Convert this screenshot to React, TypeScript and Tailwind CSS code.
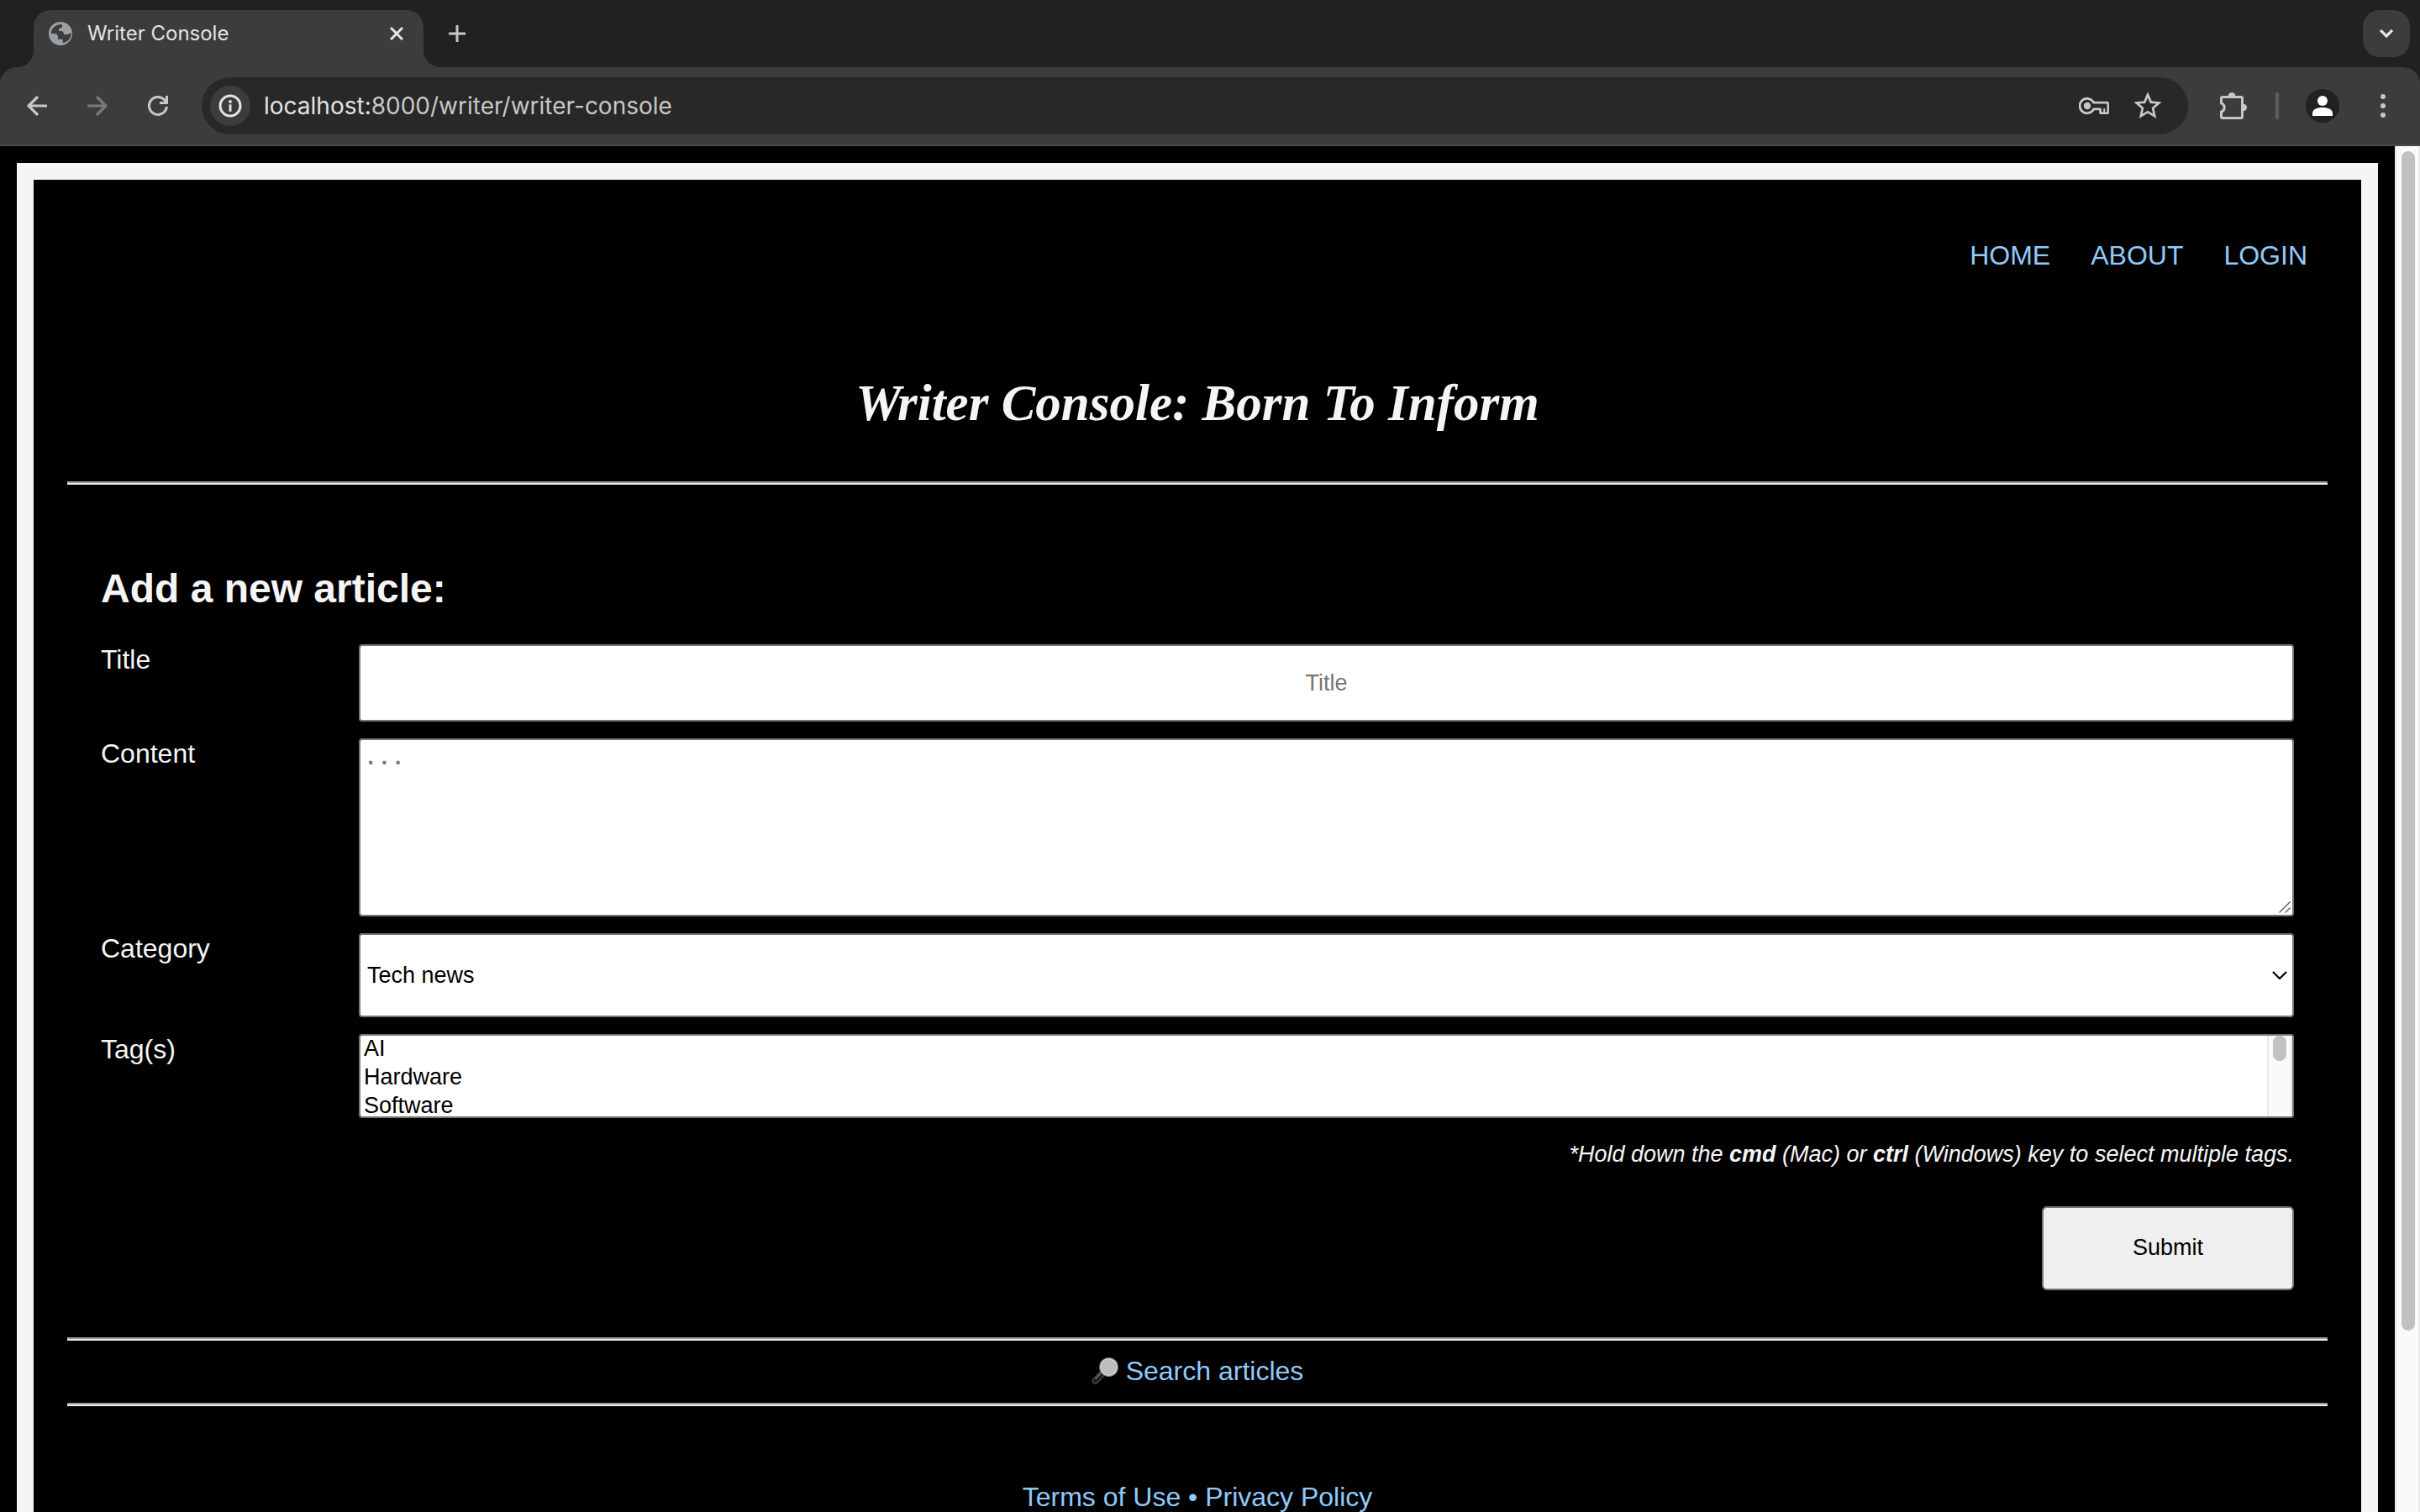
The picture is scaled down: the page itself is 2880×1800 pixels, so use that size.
import type { ReactNode } from "react";

function GlobeIcon() {
  return (
    <svg viewBox="0 0 84 84" className="size-7 shrink-0" aria-hidden="true">
      <circle cx="42" cy="42" r="42" fill="#9aa0a6" />
      <path
        d="M8 41C9 23 24 9 48 9v8c0 4-4 5-9 6-3 1-3 4-3 10h9c6 0 7 3 8 8 2 5 7 6 13 4l14-5c0 20-14 35-30 35V62H33v-9c-1-6-5-11-12-11Z"
        fill="#3c3c3c"
      />
    </svg>
  );
}

function BackIcon() {
  return (
    <svg viewBox="0 0 24 24" className="size-6" fill="none" stroke="currentColor" strokeWidth="3.2" aria-hidden="true">
      <path d="M24 12H3M13 1 2 12l11 11" />
    </svg>
  );
}

function ForwardIcon() {
  return (
    <svg viewBox="0 0 24 24" className="size-6" fill="none" stroke="currentColor" strokeWidth="3.2" aria-hidden="true">
      <path d="M0 12h21M11 1l11 11-11 11" />
    </svg>
  );
}

function ReloadIcon() {
  return (
    <svg viewBox="0 0 24 24" className="size-6" fill="none" stroke="currentColor" strokeWidth="3" aria-hidden="true">
      <path d="M22.4 13A10.5 10.5 0 1 1 19.6 4.7L22 7.5M22.5 0v8.5H14" />
    </svg>
  );
}

function InfoIcon() {
  return (
    <svg viewBox="0 0 28 28" className="size-7" aria-hidden="true">
      <circle cx="14" cy="14" r="12" fill="none" stroke="#e3e3e3" strokeWidth="3" />
      <circle cx="14" cy="9" r="1.9" fill="#e3e3e3" />
      <path d="M14 12.4v8.4" stroke="#e3e3e3" strokeWidth="3" />
    </svg>
  );
}

function KeyIcon() {
  return (
    <svg viewBox="0 0 36 24" className="h-6 w-9" fill="none" stroke="#c7c7c7" strokeWidth="2.8" strokeLinejoin="round" aria-hidden="true">
      <path d="M17.6 8.2A8.7 8.7 0 1 0 17.6 15.8H25.6V19.5a1.2 1.2 0 0 0 1.2 1.2H33.6a1.2 1.2 0 0 0 1.2-1.2V9.4a1.2 1.2 0 0 0-1.2-1.2Z" />
      <path d="M30.2 15v5" strokeWidth="2" />
      <circle cx="10" cy="12" r="4.2" fill="#c7c7c7" stroke="none" />
    </svg>
  );
}

function StarIcon() {
  return (
    <svg viewBox="0 0 24 24" className="size-10" fill="#c7c7c7" aria-hidden="true">
      <path d="M22 9.24l-7.19-.62L12 2 9.19 8.63 2 9.24l5.46 4.73L5.82 21 12 17.27 18.18 21l-1.63-7.03L22 9.24zM12 15.4l-3.76 2.27 1-4.28-3.32-2.88 4.38-.38L12 6.1l1.71 4.04 4.38.38-3.32 2.88 1 4.28L12 15.4z" />
    </svg>
  );
}

function PuzzleIcon() {
  return (
    <svg viewBox="0 0 36 36" className="size-9" aria-hidden="true">
      <path
        d="M5 7.5H27A1.5 1.5 0 0 1 28.5 9V31A1.5 1.5 0 0 1 27 32.5H5A1.5 1.5 0 0 1 3.5 31V25.2A5.5 5.5 0 0 0 3.5 14.8V9A1.5 1.5 0 0 1 5 7.5Z"
        fill="none"
        stroke="#c7c7c7"
        strokeWidth="3"
      />
      <path d="M12 6.5a4 4 0 0 1 8 0ZM29.5 16a4 4 0 0 1 0 8Z" fill="#c7c7c7" stroke="#c7c7c7" />
    </svg>
  );
}

function AvatarIcon() {
  return (
    <svg viewBox="0 0 40 40" className="size-10" aria-hidden="true">
      <circle cx="20" cy="20" r="20" fill="#1f2221" />
      <circle cx="20" cy="14" r="6" fill="#fff" />
      <path d="M8 32v-3c0-4.500 5-7 12-7s12 2.500 12 7v3Z" fill="#fff" />
    </svg>
  );
}

function MagnifierIcon() {
  return (
    <svg viewBox="0 0 32 32" className="size-8 shrink-0" aria-hidden="true">
      <path d="M12.500 19.500 4.500 27.800" stroke="#6b6b6e" strokeWidth="7.500" strokeLinecap="round" />
      <path d="M12.500 19.500 4.500 27.800" stroke="#1c1c1e" strokeWidth="5.800" strokeLinecap="round" />
      <path d="M10.500 19.500 5 25.200" stroke="#77777a" strokeWidth="1.500" strokeLinecap="round" />
      <circle cx="20.500" cy="11.500" r="11.500" fill="#6d7079" />
      <circle cx="20.500" cy="11.500" r="10.500" fill="#d8d8da" />
      <circle cx="20.500" cy="11.500" r="9.300" fill="#bdbdbd" />
    </svg>
  );
}

function ToolButton({ label, className = "", children }: { label: string; className?: string; children: ReactNode }) {
  return (
    <button type="button" aria-label={label} className={`flex h-14 w-14 shrink-0 items-center justify-center rounded-full ${className}`}>
      {children}
    </button>
  );
}

function Flare({ className }: { className: string }) {
  return (
    <svg viewBox="0 0 20 20" className={`absolute bottom-0 size-5 ${className}`} fill="#3c3c3c" aria-hidden="true">
      <path d="M20 0v20H0A20 20 0 0 0 20 0Z" />
    </svg>
  );
}

function BrowserChrome() {
  return (
    <header className="shrink-0 bg-[#1f2221] font-['Inter',sans-serif]">
      <div className="flex h-20 items-end pr-3 pl-10">
        <div className="relative flex h-[68px] w-[464px] items-center rounded-t-[20px] bg-[#3c3c3c] pr-4 pb-3 pl-[18px]">
          <Flare className="-left-5" />
          <Flare className="-right-5 -scale-x-100" />
          <GlobeIcon />
          <span className="ml-[18px] flex-1 text-[24px] leading-8 text-[#e3e3e3]">Writer Console</span>
          <button type="button" aria-label="Close tab" className="flex size-8 items-center justify-center text-[#e3e3e3]">
            <svg viewBox="0 0 16 16" className="size-4" stroke="currentColor" strokeWidth="3" aria-hidden="true">
              <path d="m1 1 14 14M15 1 1 15" />
            </svg>
          </button>
        </div>
        <button type="button" aria-label="New tab" className="mb-3 ml-3 flex size-14 items-center justify-center text-[#c7c7c7]">
          <svg viewBox="0 0 20 20" className="size-5" stroke="currentColor" strokeWidth="3" aria-hidden="true">
            <path d="M10 0v20M0 10h20" />
          </svg>
        </button>
        <button type="button" aria-label="Search tabs" className="mb-3 ml-auto flex size-14 items-center justify-center rounded-[20px] bg-[#3c3c3c] text-[#e3e3e3]">
          <svg viewBox="0 0 16 12" className="h-3 w-4" fill="none" stroke="currentColor" strokeWidth="3.2" aria-hidden="true">
            <path d="m1 2 7 7 7-7" />
          </svg>
        </button>
      </div>

      <div className="flex h-[94px] items-center rounded-t-[20px] border-b-2 border-[#4a4a4a] bg-[#3c3c3c] px-4">
        <div className="flex gap-4">
          <ToolButton label="Back" className="text-[#c7c7c7]"><BackIcon /></ToolButton>
          <ToolButton label="Forward" className="text-[#7a7a7a]"><ForwardIcon /></ToolButton>
          <ToolButton label="Reload" className="text-[#c7c7c7]"><ReloadIcon /></ToolButton>
        </div>
        <div className="ml-6 flex h-[68px] flex-1 items-center rounded-full bg-[#282828] pr-7 pl-[10px]">
          <button type="button" aria-label="View site information" className="flex size-12 shrink-0 items-center justify-center rounded-full bg-[#3c3c3c]">
            <InfoIcon />
          </button>
          <div className="ml-4 flex-1 text-[28px] leading-9 text-[#c7c7c7]">
            <span className="text-[#e3e3e3]">localhost:</span>8000/writer/writer-console
          </div>
          <button type="button" aria-label="Manage passwords"><KeyIcon /></button>
          <button type="button" aria-label="Bookmark this tab" className="ml-[26px]"><StarIcon /></button>
        </div>
        <ToolButton label="Extensions" className="ml-[26px]"><PuzzleIcon /></ToolButton>
        <span className="ml-[22px] h-8 w-1 shrink-0 rounded-full bg-[#5e5e5e]" />
        <button type="button" aria-label="Profile" className="ml-8 shrink-0"><AvatarIcon /></button>
        <ToolButton label="Browser menu" className="ml-6">
          <svg viewBox="0 0 6 28" className="h-7 w-1.5" fill="#c7c7c7" aria-hidden="true">
            <circle cx="3" cy="3" r="3" />
            <circle cx="3" cy="14" r="3" />
            <circle cx="3" cy="25" r="3" />
          </svg>
        </ToolButton>
      </div>
    </header>
  );
}

function Rule() {
  return <hr className="h-1 border-t-2 border-b-2 border-t-[#9a9a9a] border-b-[#eeeeee]" />;
}

const navLinks = ["HOME", "ABOUT", "LOGIN"];
const tags = ["AI", "Hardware", "Software"];

function ArticleForm() {
  return (
    <form className="px-10 pt-24 pb-14" onSubmit={(e) => e.preventDefault()}>
      <h2 className="text-[48px] leading-[56px] font-bold">Add a new article:</h2>
      <div className="mt-[38px] grid grid-cols-[307px_1fr] gap-y-5 text-[32px] leading-9">
        <label htmlFor="title">Title</label>
        <input
          id="title"
          type="text"
          placeholder="Title"
          className="h-[92px] w-full rounded-[4px] border-2 border-[#767676] bg-white text-center text-[27px] text-black placeholder:text-[#757575]"
        />

        <label htmlFor="content">Content</label>
        <div className="relative flex">
          <textarea
            id="content"
            placeholder="..."
            className="h-[212px] w-full resize-none rounded-[4px] border-2 border-[#767676] bg-white p-1 font-['Liberation_Mono',monospace] text-[27px] leading-9 text-black placeholder:font-bold placeholder:text-[#757575]"
          />
          <svg viewBox="0 0 14 14" className="pointer-events-none absolute right-1 bottom-1 size-3.5" stroke="#5a5a5a" strokeWidth="1.400" aria-hidden="true">
            <path d="M.5 13.500 13.500.5M7.500 13.500l6-6" />
          </svg>
        </div>

        <label htmlFor="category">Category</label>
        <div className="relative flex">
          <select
            id="category"
            className="h-[100px] w-full appearance-none rounded-[4px] border-2 border-[#767676] bg-white px-2 text-[27px] text-black"
          >
            <option>Tech news</option>
          </select>
          <svg viewBox="0 0 18 10" className="pointer-events-none absolute top-[45px] right-2 h-[10px] w-[18px]" fill="none" stroke="#000" strokeWidth="2.200" aria-hidden="true">
            <path d="m1 1 8 8 8-8" />
          </svg>
        </div>

        <label htmlFor="tags">Tag(s)</label>
        <div className="relative flex">
          <select
            id="tags"
            multiple
            size={3}
            className="h-[100px] w-full overflow-hidden rounded-[4px] border-2 border-[#767676] bg-white text-[27px] leading-[31px] text-black"
          >
            {tags.map((tag) => (
              <option key={tag} className="h-[34px] px-1 pt-0 pb-[3px]">{tag}</option>
            ))}
          </select>
          <div className="absolute top-0.5 right-0.5 bottom-0.5 flex w-[30px] justify-center border-x-2 border-[#e8e8e8] bg-[#fafafa]">
            <div className="h-[30px] w-4 rounded-full bg-[#c1c1c1]" />
          </div>
        </div>
      </div>

      <p className="mt-[27px] text-right text-[27px] leading-8 italic">
        *Hold down the <strong>cmd</strong> (Mac) or <strong>ctrl</strong> (Windows) key to select multiple tags.
      </p>
      <div className="mt-[46px] flex justify-end">
        <button type="submit" className="h-[100px] w-[300px] rounded-[6px] border-2 border-[#767676] bg-[#efefef] pb-0.5 text-[27px] text-black">
          Submit
        </button>
      </div>
    </form>
  );
}

export default function App() {
  return (
    <div className="flex h-screen flex-col overflow-hidden bg-black">
      <BrowserChrome />
      <div className="flex min-h-0 flex-1">
        <div className="min-w-0 flex-1 overflow-hidden p-5 font-['Liberation_Sans',Arial,sans-serif] text-[#f5f5f5]">
          <div className="border-20 border-[#f5f5f5] px-10 pb-20">
            <nav className="flex justify-end gap-12 pt-[72px] pr-6 text-[32px] leading-9 text-[#90caf9]">
              {navLinks.map((link) => (
                <a key={link} href="#">{link}</a>
              ))}
            </nav>
            <h1 className="mt-[122px] mb-[57px] text-center font-['Apple_Chancery','Liberation_Serif',cursive] text-[61px] leading-[72px] font-bold italic">
              Writer Console: Born To Inform
            </h1>
            <Rule />
            <main>
              <ArticleForm />
            </main>
            <Rule />
            <div className="flex justify-center pt-[18px] pb-5 text-[32px] leading-9 text-[#90caf9]">
              <a href="#" className="flex items-center gap-[9px]">
                <MagnifierIcon />
                Search articles
              </a>
            </div>
            <Rule />
            <footer className="pt-[90px] text-center text-[32px] leading-9 text-[#90caf9]">
              <a href="#">Terms of Use</a> • <a href="#">Privacy Policy</a>
            </footer>
          </div>
        </div>
        <div className="w-[30px] shrink-0 border-x-2 border-[#e8e8e8] bg-[#fafafa] pt-1.5 pl-1.5">
          <div className="h-[calc(100%-216px)] w-4 rounded-full bg-[#c1c1c1]" />
        </div>
      </div>
    </div>
  );
}
